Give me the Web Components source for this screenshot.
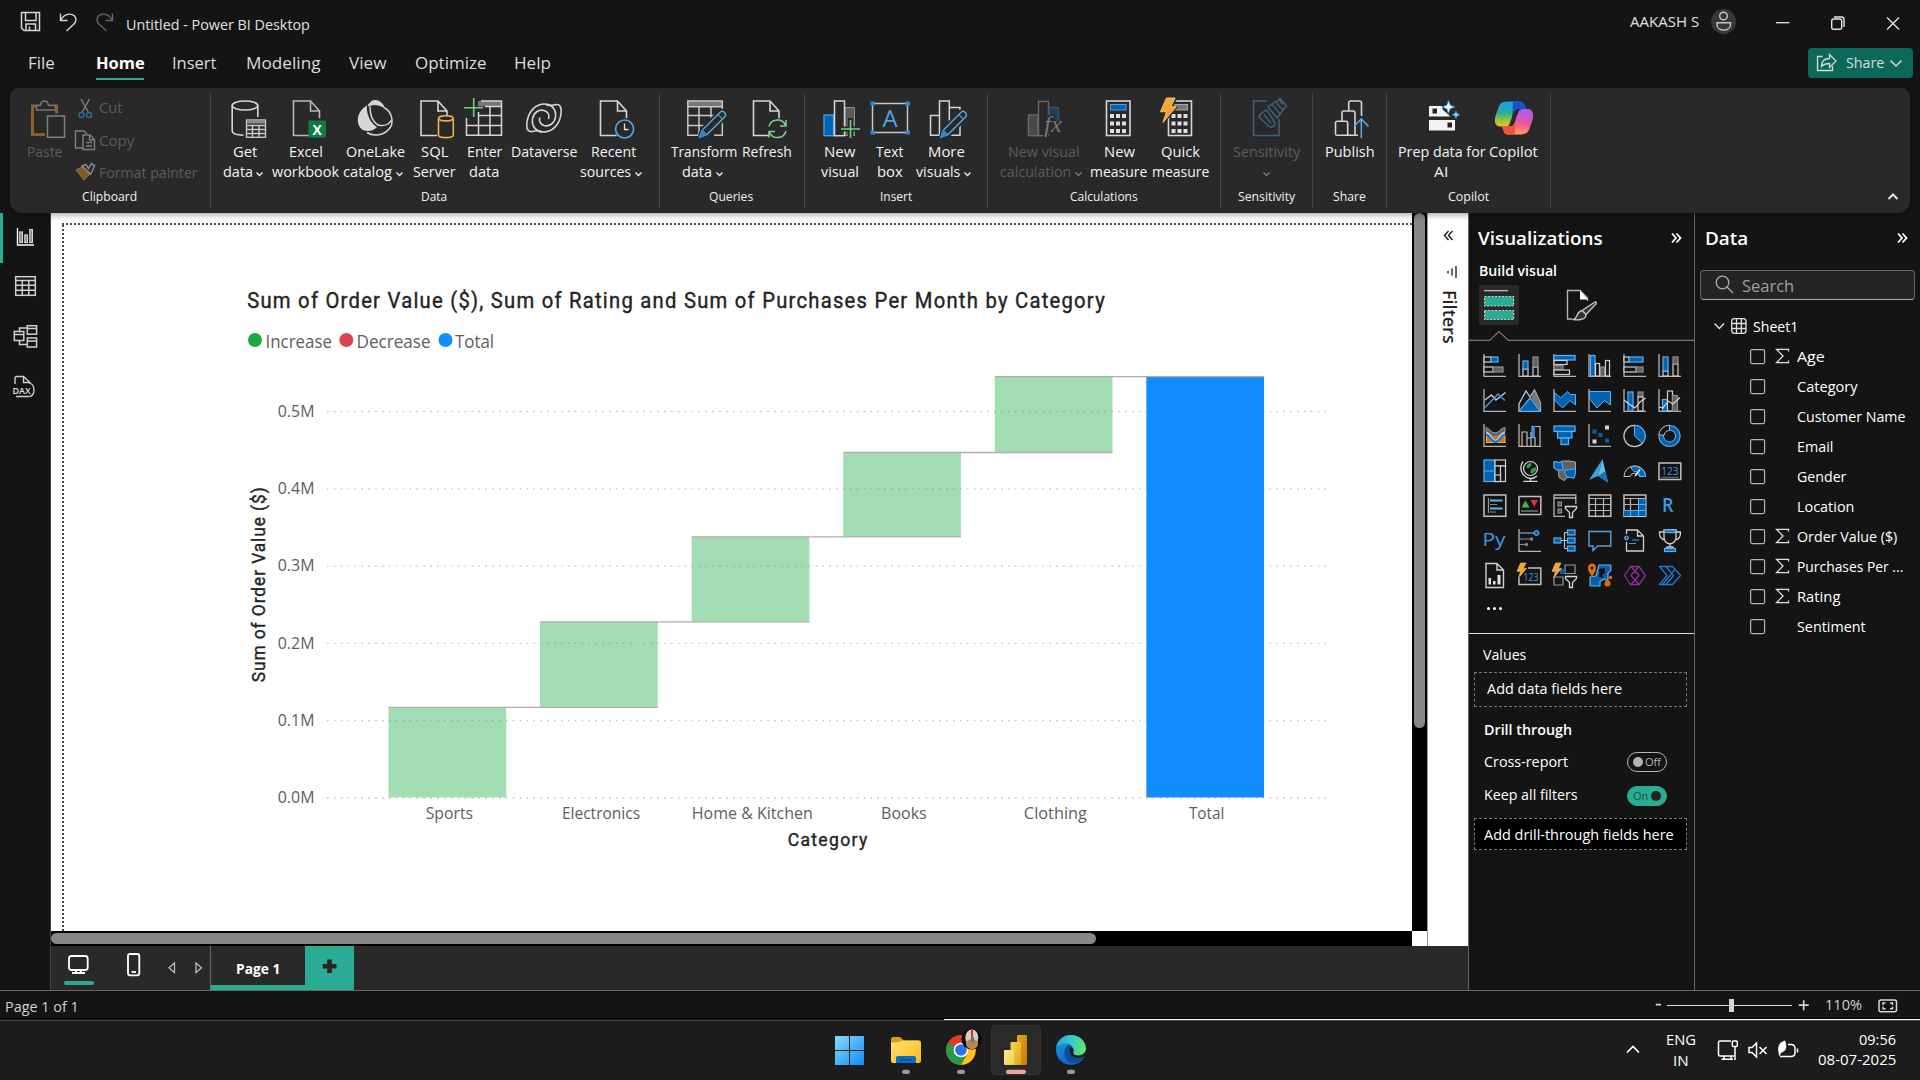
<!DOCTYPE html>
<html lang="en">
<head>
<meta charset="utf-8">
<title>Untitled - Power BI Desktop</title>
<style>
html,body{margin:0;padding:0;background:#141414;overflow:hidden}
body{width:1920px;height:1080px;font-family:"Open Sans","Noto Sans",sans-serif;color:#fff}
</style>
</head>
<body>
<pbi-app></pbi-app>
<script>
const BASE = `*{box-sizing:border-box}svg{display:block;overflow:visible}.flow{display:flex;align-items:flex-start}.flow>*{flex:none}`;
class Base extends HTMLElement {
  connectedCallback() {
    if (this.shadowRoot) return;
    this.attachShadow({ mode: 'open' }).innerHTML = `<style>${BASE}${this.css()}</style>${this.html()}`;
  }
  css() { return ':host{display:block}'; }
  html() { return '<slot></slot>'; }
}
const def = (n, c) => customElements.define(n, c);

/* Single line of text condensed or widened to a set width */
def('fit-text', class extends HTMLElement {
  connectedCallback() {
    if (this.shadowRoot) return;
    const w = +this.getAttribute('w'), s = this.getAttribute('s');
    this.attachShadow({ mode: 'open' }).innerHTML =
      `<style>:host{display:block;width:${w}px;height:20px;line-height:20px;font-size:${s}px;white-space:nowrap}
      span{display:inline-block;transform-origin:0 50%;white-space:pre}</style><span><slot></slot></span>`;
    const sp = this.shadowRoot.querySelector('span');
    const n = sp.getBoundingClientRect().width;
    if (n) sp.style.transform = `scaleX(${w / n})`;
  }
});

/* T: text by ink start and baseline; S: drawing by its box; flow: lays them in a row */
const T = (x, base, w, size, text, style = '') => {
  const fs = size * 0.975, x0 = x - size * 0.045, ww = w + size * 0.09;
  return { x: x0, w: ww, y: base - 0.388 * fs - 10, html: `<fit-text w="${ww.toFixed(1)}" s="${fs.toFixed(2)}" style="${style}">${text}</fit-text>` };
};
const S = (x, y, w, h, inner) => ({ x, y, w, html: `<svg width="${w}" height="${h}" viewBox="${x} ${y} ${w} ${h}" fill="none">${inner}</svg>` });
const flow = (x0, y0, items) => {
  let c = x0;
  return '<div class="flow">' + items.map(i => {
    const r = `<div style="width:${i.w.toFixed(1)}px;margin-left:${(i.x - c).toFixed(1)}px;margin-top:${(i.y - y0).toFixed(1)}px">${i.html}</div>`;
    c = i.x + i.w; return r;
  }).join('') + '</div>';
};

def('title-bar', class extends Base {
  css() { return ':host{display:block;height:46px;color:#e0e0e0}'; }
  html() {
    return flow(0, 0, [
      S(20, 11, 22, 22, `<g stroke="#d6d6d6" stroke-width="1.5"><path d="M21.5 12.5H39.5V30.5H24L21.5 28Z"/><path d="M25.500 12.500V20.500H36V12.500M26 30.500V24H35.500V30.500M29.500 30V26.500"/></g>`),
      S(59, 12, 19, 20, `<path d="M60.500 13.500V20.500H67.500M61 20C64 14 71 12.500 74.500 16C77 19 76 22 73.500 24.500L66.500 31" stroke="#d6d6d6" stroke-width="1.400"/>`),
      S(96, 12, 19, 20, `<path d="M112.500 13.500V20.500H105.500M112 20C109 14 102 12.500 98.500 16C96 19 97 22 99.500 24.500L106.500 31" stroke="#666" stroke-width="1.400"/>`),
      T(126.500, 30, 182.6, 15, 'Untitled - Power BI Desktop'),
      T(1630.500, 27.0, 68, 15, 'AAKASH S'),
      S(1710, 8, 27, 27, `<circle cx="1723.500" cy="21.500" r="12.500" fill="#373737"/><g stroke="#c8c8c8" stroke-width="1.400"><circle cx="1723.500" cy="16" r="3.800"/><path d="M1717 22.700H1730.500V24.500C1730.500 32 1717 32 1717 24.500Z"/></g>`),
      S(1775, 15, 16, 16, `<path d="M1776 22.700H1789.500" stroke="#e4e4e4" stroke-width="1.300"/>`),
      S(1830, 15, 16, 16, `<g stroke="#e4e4e4" stroke-width="1.400"><rect x="1831.700" y="19" width="10" height="10.300" rx="2"/><path d="M1834 17H1841.500Q1844 17 1844 19.500V27"/></g>`),
      S(1885, 15, 16, 16, `<path d="M1887 17.500L1899 29.500M1899 17.500L1887 29.500" stroke="#e4e4e4" stroke-width="1.400"/>`)
    ]);
  }
});

def('menu-bar', class extends Base {
  css() { return `:host{display:block;height:42px;color:#dcdcdc}.t{display:flex}
    .share{margin-left:auto}.btn{width:105px;height:30px;background:#0c695a;border-radius:4px;margin:2px 7px 0 0;color:#d3dedc}
    .u{width:48px;height:2.500px;background:#2aab94;margin:5px 0 0 96px}`; }
  html() {
    return `<div class="t"><div>` + flow(0, 46, [
      T(28.8, 69, 25.3, 17, 'File'), T(96.6, 69, 47.2, 17, 'Home', 'font-weight:700;color:#fff'), T(173, 69, 43, 17, 'Insert'),
      T(246.6, 69, 73, 17, 'Modeling'), T(350, 69, 36, 17, 'View'), T(415.4, 69, 70, 17, 'Optimize'), T(515, 69, 35.5, 17, 'Help')]) +
      `<div class="u"></div></div><div class="share"><div class="btn">` + flow(1808, 48, [
      S(1816, 52, 21, 20, `<path d="M1822.500 56.500H1817.500V70.500H1832.500V66M1821.500 66.500C1821.500 60.500 1825 58.500 1829.500 58.500V54.500L1836 61L1829.500 67.500V63.500C1826 63.500 1824 64 1821.500 66.500Z" stroke="#cfdeda" stroke-width="1.300"/>`),
      T(1847, 68, 37, 15.5, 'Share'),
      S(1889, 59, 14, 8, `<path d="M1890.500 60.500L1896 66L1901.500 60.500" stroke="#d3dedc" stroke-width="1.500"/>`)]) + `</div></div></div>`;
  }
});

/* ---------- Ribbon ---------- */
const doc = (x, y, w, h, c = '#d6d6d6') => `<path d="M${x + w} ${y + h * .5}V${y + 10}L${x + w - 9} ${y}H${x}V${y + h}H${x + w * .62}M${x + w - 9} ${y}V${y + 10}H${x + w}" stroke="${c}" stroke-width="1.600"/>`;
const pencil = (x1, y1, x2, y2) => { const dx = x2 - x1, dy = y2 - y1, L = Math.hypot(dx, dy), a = Math.atan2(dy, dx) * 180 / Math.PI; return `<g transform="translate(${x1} ${y1}) rotate(${a})"><path d="M0 0L8 -4H${L - 3}Q${L} -4 ${L} 0Q${L} 4 ${L - 3} 4H8Z" fill="#292929" stroke="#292929" stroke-width="4"/><path d="M0 0L7 -3.200H${L - 3}Q${L} -3.200 ${L} 0Q${L} 3.200 ${L - 3} 3.200H7Z" stroke="#5aa7e0" stroke-width="1.400"/><path d="M0 0L7 -3.200V3.200Z" fill="#2b88d8" stroke="#2b88d8"/><path d="M${L - 6} -3V3" stroke="#5aa7e0"/></g>`; };
const keys = (x, y) => [0, 1, 2].map(r => [0, 1, 2].map(c => `<rect x="${x + c * 6}" y="${y + r * 7.500}" width="4" height="4" fill="#e0e0e0"/>`).join('')).join('');
const chev = (x, col = '#e8e8e8') => S(x, 171, 7, 5, `<path d="M${x + .5} 171.500L${x + 3.500} 174.500L${x + 6.500} 171.500" stroke="${col}" stroke-width="1.500"/>`);
const bolt = (x, y, k = 1) => `<path transform="translate(${x} ${y}) scale(${k})" d="M6 0H15L10.500 9H16L2.500 25L6 14H0Z" fill="#f2a33c" stroke="#ffc266" stroke-width="1"/>`;

const RI = {
  get: `<g stroke="#d6d6d6" stroke-width="1.600"><ellipse cx="245" cy="105.500" rx="12.800" ry="4.500"/><path d="M232.200 105.500V131C232.200 133.500 237 135 243.500 135.200M257.800 105.500V117"/></g><rect x="245.500" y="119.500" width="20.500" height="18.300" fill="#292929"/><g stroke="#c8c8c8" stroke-width="1.400"><rect x="246.500" y="120" width="19" height="17.300"/><path d="M246.500 125.500H265.500M246.500 129.500H265.500M246.500 133.500H265.500M252.500 125V137M259 125V137"/></g><rect x="247" y="120.500" width="18" height="3" fill="#8a8a8a"/>`,
  excel: doc(293.5, 101, 26, 34.5, '#b9b9b9') + `<rect x="308.500" y="120.500" width="17.500" height="17.200" fill="#107c41"/><text x="317.200" y="134.500" text-anchor="middle" fill="#fff" font-weight="700" font-size="14">X</text>`,
  lake: `<path d="M375 100.500C380 100.500 383 104 384 107.500C378 103.500 372 104.500 368 106C369.500 102.500 372 100.500 375 100.500Z" fill="#d6d6d6" stroke="#d6d6d6"/><path d="M367 105.500C358 110 355.500 121 360 127.500C363.500 132.500 373 132 377 127C370 123 366 113 367 105.500Z" fill="#d6d6d6"/><path d="M384 107.500C393 112 394 124 389 129C384 135 374 137 367 132.500M370 106.500C370 117 374 124 380 125.500C385 126 389.500 123.500 391.500 120" stroke="#d6d6d6" stroke-width="1.500"/>`,
  sql: doc(421, 101, 26, 34.5) + `<g stroke="#f0b050" stroke-width="1.600" fill="#292929"><path d="M438.500 118.500V135C438.500 138.500 453.300 138.500 453.300 135V118.500"/><ellipse cx="445.900" cy="118.300" rx="7.400" ry="2.600"/></g>`,
  enter: `<rect x="478" y="101" width="23.500" height="5.500" fill="#777"/><g stroke="#d6d6d6" stroke-width="1.500"><path d="M481 101H501.500V135.200H466.500V118M466.500 135V118M485 106.500H501.500M478 115.500H501.500M466.500 125.500H501.500M478.500 112V135M490 106.500V135"/></g><path d="M473.700 98V117M464 107.700H483" stroke="#6fd07f" stroke-width="1.600"/>`,
  verse: `<g stroke="#d6d6d6" stroke-width="1.600"><path d="M541 131.500C536 129.500 533 132 530 131.500C527 131 526.500 126 527 122C528.500 111 536 104 544.500 104C552 104 556.500 110 555.500 117C554.500 123.500 549 127 544 125.500C540 124 538.500 120.500 540 117.500"/><path d="M546 104.500C551 107 554.500 104 557.500 104.500C561 105 561.500 110 561 114C559.500 125 552 132 543.500 132C536 132 531.500 126 532.500 119C533.500 112.500 539 109 544 110.500C548.500 112 550 115.500 548.500 119"/></g>`,
  recent: doc(600.5, 101, 26, 34.5) + `<circle cx="624.600" cy="129" r="9" fill="#292929" stroke="#5aa7e0" stroke-width="1.600"/><path d="M624.500 123.500V129.500H628.500" stroke="#ddd" stroke-width="1.300"/>`,
  transform: `<rect x="688" y="101" width="34" height="5.500" fill="#777"/><g stroke="#c8c8c8" stroke-width="1.500"><path d="M722.300 110V101H687.800V135.200H700M687.800 106.800H722.300M687.800 115.500H716M687.800 125.500H708M699 107V135M711 107V120"/></g><path d="M714 135.200H722.300V122" stroke="#c8c8c8" stroke-width="1.500"/>` + pencil(699.7, 137.3, 724.5, 112.5),
  refresh: doc(753.5, 101, 25.5, 34.5) + `<circle cx="777.500" cy="128.700" r="9" fill="#292929"/><g stroke="#7fd48f" stroke-width="1.500"><path d="M769 126.500A8.800 8.800 0 0 1 785.500 125M786 120V126H780M786 131A8.800 8.800 0 0 1 769.500 132.500M769 137.500V131.500H775"/></g>`,
  newvis: `<rect x="845" y="107.500" width="9.500" height="28" fill="#5a5a5a" stroke="#909090"/><rect x="824" y="115" width="9.500" height="20.700" fill="#0063b1" stroke="#4ba0e8" stroke-width="1.300"/><rect x="834.500" y="101" width="10" height="34.700" fill="#292929" stroke="#d6d6d6" stroke-width="1.500"/><path d="M850.500 118V140M840 129H861" stroke="#292929" stroke-width="5"/><path d="M850.500 120V138M841 129H860" stroke="#6fd07f" stroke-width="1.600"/>`,
  textbox: `<rect x="872.500" y="103.500" width="35" height="29" stroke="#c8c8c8" stroke-width="1.500"/><g fill="#2b88d8"><rect x="870.500" y="101.500" width="4.500" height="4"/><rect x="905.500" y="101.500" width="4.500" height="4"/><rect x="870.500" y="130.500" width="4.500" height="4"/><rect x="905.500" y="130.500" width="4.500" height="4"/></g><text x="890" y="127" text-anchor="middle" font-size="24" fill="#4ba0e8">A</text>`,
  more: `<g stroke="#d6d6d6" stroke-width="1.500"><path d="M938.700 115.500H930.500V135.300H943M939.500 135V101H949.300V127M949.300 107.500H960V112M960 125V135.300H950"/></g>` + pencil(940.8, 137.3, 965.3, 112.5),
  calc: `<g stroke="#6b6b6b" stroke-width="1.400"><rect x="1028.500" y="115" width="9.500" height="20.700" fill="#484848"/><rect x="1038.500" y="101.500" width="10" height="34.200" fill="#292929"/><rect x="1049" y="107.500" width="9.500" height="13" fill="#1d3f5c" stroke="#3b5568"/></g><text x="1053" y="132" text-anchor="middle" font-family="Liberation Serif,serif" font-style="italic" font-size="24" fill="#777" stroke="#292929" stroke-width="3" paint-order="stroke">fx</text>`,
  measure: `<rect x="1106.500" y="101" width="23.500" height="34.500" stroke="#d6d6d6" stroke-width="1.600"/><rect x="1110.500" y="104.500" width="15.500" height="5.500" fill="#0063b1" stroke="#4ba0e8"/>` + keys(1110, 114),
  quick: `<rect x="1168.500" y="101" width="23" height="34.500" stroke="#d6d6d6" stroke-width="1.600"/><rect x="1174" y="104.500" width="13.500" height="5.500" fill="#777" stroke="#aaa"/>` + keys(1171.5, 114) + `<path d="M1165 97H1178L1173 107H1178L1162 126L1163 114H1158Z" fill="#292929"/>` + bolt(1160.5, 98, .98),
  sens: `<g stroke="#3f617a" stroke-width="1.500"><path d="M1267 101H1253.500V135.500H1279V119"/><path d="M1261.500 113.500L1265 110.500Q1266.500 110 1267.500 111L1275 123Q1275 126 1272 127Q1270 127.500 1268.500 126L1259 117Q1259.500 114.500 1261.500 113.500ZM1264 114.500L1271 123.500"/><path d="M1268 107L1272 104L1280 114L1277 118ZM1272 104L1275.500 101.500L1283 110.500L1280 114M1276 103L1280 98.500L1286.500 106L1282.500 110M1279 99.500L1283 104.500" fill="#292929"/></g>`,
  publish: `<g stroke="#d6d6d6" stroke-width="1.600"><path d="M1348 135.300H1337Q1335.500 135.300 1335.500 134V123Q1335.500 121.300 1337 121.300H1346Q1347.700 121.300 1347.700 123V135.300H1358M1342 121V113Q1342 111 1344 111H1353Q1355 111 1355 113V135M1348.700 111V103Q1348.700 101 1350.700 101H1359.500Q1361.500 101 1361.500 103V116"/></g><path d="M1361.300 138V119M1354 126.500L1361.300 119L1368.500 126.500" stroke="#5aa7e0" stroke-width="1.600"/>`,
  prep: `<path d="M1429 106H1455V116.500H1429ZM1429 120H1455V130.500H1429Z" fill="#f4f4f4"/><rect x="1432.500" y="108.500" width="4.500" height="5" fill="#222"/><rect x="1447.500" y="122.500" width="4.500" height="5" fill="#222"/><path d="M1441 104L1449 98L1462 112L1456 119.500H1452L1449 115L1443 110Z" fill="#292929"/><g fill="#fff" stroke="#1a8fe0" stroke-width="1"><path d="M1448.500 100.500L1450.300 105.200L1455 107L1450.300 108.800L1448.500 113.500L1446.700 108.800L1442 107L1446.700 105.200Z"/><path d="M1456 111L1457.200 113.500L1459.700 114.700L1457.200 116L1456 118.500L1454.800 116L1452.300 114.700L1454.800 113.500Z" fill="#8fd0ff"/></g>`,
  copilot: `<defs><linearGradient id="a" x1="0" y1="0" x2="0" y2="1"><stop offset="0" stop-color="#1f9cf0"/><stop offset=".45" stop-color="#25b09c"/><stop offset=".75" stop-color="#9cc23a"/><stop offset="1" stop-color="#f5c518"/></linearGradient><linearGradient id="b" x1=".6" y1="0" x2=".3" y2="1"><stop offset="0" stop-color="#a95cf0"/><stop offset=".5" stop-color="#f0559a"/><stop offset="1" stop-color="#ffae5c"/></linearGradient></defs><path d="M1510 101.500H1520C1524 101.500 1524.500 106 1526 109H1518C1514 109 1513 113 1512 117L1509.500 124C1508.500 127 1506 127 1504 126.500H1500C1495 126.500 1494 121 1495.500 116L1499 106C1501 102 1504 101.500 1510 101.500Z" fill="url(#a)"/><path d="M1513 101.500H1520C1524 101.500 1524.500 106 1526 109H1518C1514.500 109 1513.500 112 1512.500 115Z" fill="#1750d6"/><path d="M1518 134.500H1508C1504 134.500 1503.500 130 1502 126.500H1510C1514 126.500 1515 122 1516 118L1518.500 112C1519.500 109 1522 109 1524 109H1528C1533 109 1534 115 1532.500 120L1529 130C1527 134 1524 134.500 1518 134.500Z" fill="url(#b)"/><path d="M1515 134.500H1508C1504 134.500 1503.500 130 1502 126.500H1510C1513 126.500 1514.500 124 1515.300 121Z" fill="#f0503c"/>`
};

/* One command: icon above one or two caption lines */
def('ribbon-item', class extends Base {
  css() { return ':host{display:block;flex:none}.icon{height:44px}.l{height:20px}.l .flow{height:20px}'; }
  html() {
    const d = RIBBON[this.getAttribute('group')].items[+this.getAttribute('index')];
    const [x, w, ic, l1, l2, c, off] = d;
    const col = off ? 'color:#5c5c5c' : 'color:#f3f3f3';
    return `<div class="icon">${flow(x, 97, [S(x, 97, w, 42, RI[ic])])}</div><div class="l">${flow(x, 141.5, [T(l1[0], 157.3, l1[1], 15, l1[2], col)])}</div><div class="l">${flow(x, 161.5, [].concat(l2 ? [T(l2[0], 177.3, l2[1], 15, l2[2], col)] : [], c ? [{ ...chev(c, off ? '#777' : '#e8e8e8'), y: 172.5 }] : []))}</div>`;
  }
});
const RIBBON = [
  { x: 211, end: 659, label: [422, 25, 'Data'], items: [
    [221, 50, 'get', [234, 23, 'Get'], [224, 28.7, 'data'], 256],
    [271, 70, 'excel', [289.5, 32.5, 'Excel'], [273, 65.7, 'workbook']],
    [341, 66, 'lake', [346.4, 57.7, 'OneLake'], [344, 47.6, 'catalog'], 396],
    [407, 52, 'sql', [421.3, 26, 'SQL'], [413.7, 41.3, 'Server']],
    [459, 50, 'enter', [467.6, 34, 'Enter'], [470, 29, 'data']],
    [509, 70, 'verse', [511.8, 65.2, 'Dataverse']],
    [579, 68, 'recent', [592, 44, 'Recent'], [581, 49.7, 'sources'], 635]] },
  { x: 660, end: 804, label: [710, 43, 'Queries'], items: [
    [669, 71, 'transform', [672, 65.2, 'Transform'], [683, 28.6, 'data'], 716],
    [740, 54, 'refresh', [742.5, 48.5, 'Refresh']]] },
  { x: 805, end: 987, label: [880.6, 31, 'Insert'], items: [
    [816, 48, 'newvis', [824.7, 30, 'New'], [821.3, 36.6, 'visual']],
    [864, 50, 'textbox', [877, 26, 'Text'], [877.7, 24.4, 'box']],
    [914, 62, 'more', [928.6, 35.4, 'More'], [917, 43, 'visuals'], 964]] },
  { x: 988, end: 1220, label: [1071, 66.5, 'Calculations'], items: [
    [998, 89, 'calc', [1008.6, 70.3, 'New visual'], [1001, 70, 'calculation'], 1075, 1],
    [1087, 63, 'measure', [1104.5, 29.5, 'New'], [1091, 56, 'measure']],
    [1150, 63, 'quick', [1161.4, 37.5, 'Quick'], [1152.5, 56, 'measure']]] },
  { x: 1221, end: 1312, label: [1239, 56, 'Sensitivity'], items: [[1230, 74, 'sens', [1234, 66, 'Sensitivity'], null, 1263, 1]] },
  { x: 1313, end: 1386, label: [1333.6, 31.7, 'Share'], items: [[1322, 56, 'publish', [1325.3, 48.2, 'Publish']]] },
  { x: 1387, end: 1550, label: [1448.4, 40, 'Copilot'], items: [
    [1396, 91, 'prep', [1398.8, 86.3, 'Prep data for'], [1435, 13, 'AI']],
    [1487, 55, 'copilot', [1489.9, 47.4, 'Copilot']]] }
];
def('ribbon-group', class extends Base {
  css() { return ':host{display:block;flex:none}.g{height:115px;border-right:1px solid #444}.r{display:flex;height:95.500px;padding-top:4px}'; }
  html() {
    const n = +this.getAttribute('index'), g = RIBBON[n];
    return `<div class="g" style="width:${g.end + 1 - g.x}px"><div class="r" style="padding-left:${g.items[0][0] - g.x}px">${g.items.map((_, i) => `<ribbon-item group="${n}" index="${i}"></ribbon-item>`).join('')}</div>${flow(g.x, 188.5, [T(g.label[0], 200.7, g.label[1], 13, g.label[2], 'color:#f0f0f0')])}</div>`;
  }
});
def('clipboard-group', class extends Base {
  css() { return ':host{display:block;flex:none}.g{width:201px;height:115px;border-right:1px solid #444;color:#5c5c5c}.r{display:flex;height:95.500px}.a{width:60px}.b{display:flex;flex-direction:column}.b>div{height:32.500px;flex:none}'; }
  html() {
    return `<div class="g"><div class="r"><div class="a">${flow(10, 93, [S(30, 99, 38, 40, `<rect x="32.500" y="106" width="24" height="28.500" stroke="#89622a" stroke-width="3"/><path d="M36.500 110V105.500H40.500C41 99.500 48 99.500 48.500 105.500H55.500V110Z" fill="#292929" stroke="#757575" stroke-width="1.500"/><rect x="47.500" y="116" width="17" height="21.300" fill="#292929" stroke="#292929" stroke-width="5"/><rect x="47.500" y="116" width="17" height="21.300" stroke="#808080" stroke-width="1.500"/>`)])}${flow(10, 139, [T(27.8, 156.6, 34, 15, 'Paste')])}</div>
    <div class="b"><div>${flow(70, 93, [S(76, 98, 20, 21, `<path d="M81 99L88.500 112.500M89.500 99L82 112.500" stroke="#808080" stroke-width="1.400"/><g stroke="#2e6a94" stroke-width="1.500"><circle cx="81.500" cy="115" r="2.500"/><circle cx="89" cy="115" r="2.500"/></g>`), T(100, 112.7, 22, 15, 'Cut')])}</div>
    <div>${flow(70, 125.5, [S(74, 129, 22, 22, `<g stroke="#808080" stroke-width="1.400"><path d="M83 148H75.500V131H84L87 134"/><path d="M83 135H90L94.500 139.500V149.500H83ZM89.500 135V140H94M86 142.500H92M86 146H92"/></g>`), T(100, 146, 34, 15, 'Copy')])}</div>
    <div>${flow(70, 158, [S(74, 162, 22, 21, `<path d="M76 170L84 180L90 174L82 167Z" fill="#7c5c22" stroke="#8a7550"/><path d="M82 166L90.500 174L92.500 170.500L94.500 165.500L91.500 163.500L88.500 168.500L86 164.500Z" fill="#292929" stroke="#8a8a8a" stroke-width="1.500"/>`), T(100, 178, 97.3, 15, 'Format painter')])}</div></div></div>
    ${flow(10, 188.5, [T(83, 200.7, 54, 13, 'Clipboard', 'color:#f0f0f0')])}</div>`;
  }
});
def('ribbon-bar', class extends Base {
  css() { return ':host{display:block;height:125px;margin:0 10px;background:#292929;border-radius:9px 9px 12px 12px;position:relative;z-index:2;box-shadow:0 2px 6px rgba(0,0,0,.35)}.r{display:flex;padding-top:5px}.c{margin:99px 10px 0 auto}'; }
  html() {
    return `<div class="r"><clipboard-group></clipboard-group>${RIBBON.map((_, i) => `<ribbon-group index="${i}"></ribbon-group>`).join('')}
    <svg class="c" width="14" height="9" viewBox="0 0 14 9" fill="none"><path d="M2.500 7L7 2.500L11.500 7" stroke="#e0e0e0" stroke-width="2"/></svg></div>`;
  }
});

/* ---------- Left rail ---------- */
def('side-rail', class extends Base {
  css() { return ':host{display:block;width:51px;border-right:1px solid #444;background:#141414}.i{height:50px;display:flex}.on{border-left:3px solid #2aab94}.on svg{margin-left:-3px}'; }
  html() {
    return `<div class="i on"><svg width="50" height="50" viewBox="0 213 50 50" fill="none"><path d="M17.500 228V245H34" stroke="#fff" stroke-width="1.400"/><g fill="#777" stroke="#d6d6d6" stroke-width="1.200"><rect x="19.800" y="232" width="2.600" height="10.500"/><rect x="24.800" y="235" width="2.600" height="7.500"/><rect x="29.800" y="229.500" width="2.600" height="13"/></g></svg></div>
    <div class="i"><svg width="50" height="50" viewBox="0 263 50 50" fill="none"><g stroke="#cfcfcf" stroke-width="1.500"><rect x="15.700" y="276.700" width="19.600" height="18.600"/><path d="M15.700 280.500H35.300M15.700 285.300H35.300M15.700 290.300H35.300M22.300 280V295M28.800 280V295"/></g></svg></div>
    <div class="i"><svg width="50" height="50" viewBox="0 313 50 50" fill="none"><g stroke="#cfcfcf" stroke-width="1.500"><rect x="14.300" y="331.500" width="9.500" height="9"/><path d="M14 334.500H24M27.300 328.500H36.500M27.300 341H36.500M19.500 331V328H27M19.500 341V344.500H27"/><rect x="27.300" y="325.700" width="9.300" height="8.500"/><rect x="27.300" y="338" width="9.300" height="9"/></g></svg></div>
    <div class="i"><svg width="50" height="50" viewBox="0 363 50 50" fill="none"><path d="M15 384V378.500Q15 376.500 17 376.500H23.500L30 382.500V384M23.500 377V382.500H30M16 396.500H29" stroke="#cfcfcf" stroke-width="1.400"/><text x="12.500" y="393.500" font-size="9.500" font-weight="600" fill="#e0e0e0" textLength="18" lengthAdjust="spacingAndGlyphs">DAX</text><path d="M31 383.500Q34.500 386 33.800 392Q33 396 29.500 396.500" stroke="#cfcfcf" stroke-width="1.300"/></svg></div>`;
  }
});

/* ---------- Report canvas ---------- */
def('waterfall-chart', class extends Base {
  css() { return ':host{display:block;width:1361px;height:718px;background:#fff}text{white-space:pre}'; }
  html() {
    const t = (x, y, w, s, txt, f = '#605e5c') => `<text x="${x - s * .045}" y="${y}" font-size="${s * .975}" fill="${f}" textLength="${w + s * .09}" lengthAdjust="spacingAndGlyphs">${txt}</text>`;
    /* headings: slightly narrowed glyphs with wider tracking */
    const hd = (x, y, w, s, txt) => `<g transform="translate(${x} ${y}) scale(.945 1)"><text x="0" y="0" font-family="Roboto,sans-serif" font-size="${s}" fill="#252423" stroke="#252423" stroke-width=".4" textLength="${(w + .5) / .945}" lengthAdjust="spacing">${txt}</text></g>`;
    const grid = [0, 1, 2, 3, 4, 5].map(i => { const y = 798 - i * 77.3; return `<path d="M327 ${y}H1326" stroke="#c8c6c4" stroke-width="1.300" stroke-dasharray="1.600 5.280"/>` + t(278.5, y + 5.3, 35.3, 16, `0.${i}M`); }).join('');
    const tops = [707.4, 621.8, 536.8, 452.5, 376.6], X = i => 388.5 + i * 151.57;
    const bars = tops.map((y, i) => `<rect x="${X(i)}" y="${y}" width="117.700" height="${(i ? tops[i - 1] : 797.5) - y}" fill="#1aab40" fill-opacity=".4"/>`).join('') + `<rect x="${X(5)}" y="376.600" width="117.700" height="420.900" fill="#118dff"/>`;
    const lines = tops.map((y, i) => `<path d="M${X(i)} ${y}H${X(i + 1) + 117.7}" stroke="#b0adab" stroke-width="1.300"/>`).join('');
    return `<svg width="1361" height="718" viewBox="51 213 1361 718" style="overflow:hidden">
    <path d="M62 224H1412M63 225V931" stroke="#4a4a4a" stroke-width="2" stroke-dasharray="2 2"/>
    ${hd(247.2, 308, 857, 21.4, 'Sum of Order Value ($), Sum of Rating and Sum of Purchases Per Month by Category')}
    <circle cx="255" cy="340" r="7" fill="#1aab40"/><circle cx="346.300" cy="340" r="7" fill="#d64550"/><circle cx="445.500" cy="340" r="7" fill="#118dff"/>
    ${t(266.4, 348.3, 64.7, 18, 'Increase')}${t(357.4, 348.3, 72.4, 18, 'Decrease')}${t(455.8, 348.3, 37.5, 18, 'Total')}
    ${grid}${bars}${lines}
    ${t(426.4, 819, 46, 16, 'Sports')}${t(562.6, 819, 76.8, 16, 'Electronics')}${t(692.5, 819, 119.6, 16, 'Home &amp; Kitchen')}${t(881.8, 819, 44.2, 16, 'Books')}${t(1024.6, 819, 61.6, 16, 'Clothing')}${t(1189.6, 819, 34, 16, 'Total')}
    ${hd(787.7, 846, 79, 18.6, 'Category')}
    <g transform="translate(264.700 682.300) rotate(-90)">${hd(0, 0, 194.5, 18.4, 'Sum of Order Value ($)')}</g></svg>`;
  }
});
def('report-canvas', class extends Base {
  css() { return `:host{display:block;width:1417px}.top{display:flex;height:718px}.vs{width:15px;background:#000;padding:0 2px}.vt{height:515px;background:#888786;border-radius:6px}
    .hs{display:flex;height:15px}.ht{width:1361px;background:#000;padding:2px 0}.hth{width:1045px;height:11px;border-radius:6px;background:#888786}
    .body{display:flex}.l{width:1376px}.f{width:41px;background:#fff;border-left:1px solid #999}
    .v{writing-mode:vertical-rl;color:#252423;font-size:18px;font-weight:600;line-height:20px;height:58px;width:20px;margin:8px 0 0 12px;letter-spacing:0}
    .w{background:#fff;flex:1}`; }
  html() {
    return `<div class="body"><div class="l"><div class="top"><waterfall-chart></waterfall-chart><div class="vs"><div class="vt"></div></div></div><div class="hs"><div class="ht"><div class="hth"></div></div><div class="w"></div></div></div>
    <div class="f"><svg width="40" height="69" viewBox="1428 213 40 69" fill="none"><path d="M1448.500 231L1444.500 235.500L1448.500 240M1452.500 231L1448.500 235.500L1452.500 240" stroke="#252423" stroke-width="1.500"/><path d="M1456 266V278M1452 268.500V275.500M1448 271V273.500" stroke="#333" stroke-width="1.500"/></svg><div class="v">Filters</div></div></div>
    <page-tabs></page-tabs>`;
  }
});
def('page-tabs', class extends Base {
  css() { return `:host{display:flex;height:44px;background:#292929}.n{width:159px}.tab{width:95px;height:44px;border-left:1px solid #666;border-bottom:5px solid #2aab94}.p{width:49px;background:#2aab94}`; }
  html() {
    return `<div class="n"><svg width="159" height="44" viewBox="51 946 159 44" fill="none"><g stroke="#fff" stroke-width="1.800"><rect x="69" y="956" width="18.700" height="14" rx="2.500"/><path d="M72 973H85M76 970V973M81 970V973"/><rect x="128" y="954" width="11.300" height="21.300" rx="2"/><path d="M131.500 972H136"/></g><rect x="64" y="981" width="30" height="4" rx="2" fill="#2aab94"/><path d="M174.500 963V972.500L169 967.700ZM196 963V972.500L201.500 967.700Z" stroke="#b8b8b8" stroke-width="1.300"/></svg></div>
    <div class="tab">${flow(211, 946, [T(236.4, 974, 43, 15, 'Page 1', 'font-weight:700;color:#fff')])}</div>
    <div class="p"><svg width="49" height="44" viewBox="305 946 49 44"><path d="M329.500 959.500V973M322.700 966.200H336.500" stroke="#252423" stroke-width="4.600"/></svg></div>`;
  }
});

/* ---------- Visualizations pane ---------- */
const AX = '<path d="M1 0V22.300H23" stroke="#b4b4b4" stroke-width="1.300"/>';
const r = (x, y, w, h, k) => { const c = { b: ['#0063b1', '#5fb0ee'], g: ['#606060', '#8f8f8f'], w: ['#141414', '#d0d0d0'] }[k]; return `<rect x="${x}" y="${y}" width="${w}" height="${h}" fill="${c[0]}" stroke="${c[1]}" stroke-width="1.200"/>`; };
const funnel = '<path d="M12.500 12.500H23.500V14.500L19.500 18.500V23.500H16.500V18.500L12.500 14.500Z" fill="#141414" stroke="#d6d6d6" stroke-width="1.300"/>';
const tx = (x, y, s, t, w, c = '#3a9be8', b = 400) => `<text x="${x}" y="${y}" font-size="${s}" fill="${c}" font-weight="${b}" textLength="${w}" lengthAdjust="spacingAndGlyphs">${t}</text>`;
const sbolt = bolt(-1, -1, .6);
const VI = [
  AX + r(1, 3, 7, 5, 'w') + r(8, 3, 7, 5, 'b') + r(1, 13, 9, 5, 'w') + r(10, 13, 10, 5, 'g'),
  AX + r(5, 15, 5, 7, 'w') + r(5, 7, 5, 8, 'b') + r(15, 13, 5, 9, 'w') + r(15, 3, 5, 10, 'g'),
  AX + r(1, 1.5, 21, 4.5, 'b') + r(1, 6.5, 13, 4, 'w') + r(1, 11.500, 9, 4.5, 'g') + r(1, 16, 15.500, 4.500, 'w'),
  AX + r(2.5, 1.5, 4.500, 20.500, 'b') + r(7.5, 9.5, 4, 12.500, 'w') + r(12.500, 13, 4, 9, 'g') + r(17.500, 6.500, 4, 15.500, 'w'),
  AX + r(1, 3, 5, 5, 'w') + r(6, 3, 14, 5, 'b') + r(1, 13, 12, 5, 'w') + r(13, 13, 7, 5, 'g'),
  AX + r(5, 17, 5, 5, 'w') + r(5, 3, 5, 14, 'b') + r(15, 10, 5, 12, 'w') + r(15, 3, 5, 7, 'g'),
  AX + '<path d="M2 11L8.500 6L13 11L22.500 3.500" stroke="#d0d0d0" stroke-width="1.300"/><path d="M1.500 19L15 5L22 11.500" stroke="#3a9be8" stroke-width="1.400"/>',
  '<path d="M1 22V15L8 2L12 8L16.500 1L22.500 14V22" stroke="#d0d0d0" stroke-width="1.200"/><path d="M16.500 1L22.500 14V22L13 9Z" fill="#777"/><path d="M1 22.300L12 9L22.300 22.300Z" fill="#0063b1" stroke="#5fb0ee" stroke-width="1.200"/>',
  AX + '<path d="M1.500 3.500L7.500 9L14.500 2.500L17.500 5.500H22.500V16L17 11.500L9.500 19L1.500 11Z" fill="#0063b1" stroke="#5fb0ee"/>',
  AX + '<path d="M1.500 2.500H22.500V16L16.500 11.500L9 19L1.500 9.500Z" fill="#0063b1" stroke="#5fb0ee"/>',
  AX + r(5, 3, 5, 19, 'b') + r(15, 3, 5, 5, 'g') + r(15, 8, 5, 14, 'w') + '<path d="M1 11L6 15L12 19L17 13L22.500 9" stroke="#d6d6d6" stroke-width="1.200"/>',
  AX + r(4.500, 10.500, 5, 11.500, 'b') + r(9.500, 2, 5, 20, 'w') + r(14.500, 6.500, 5, 15.500, 'g') + '<path d="M1 18L5 19L10 12L15 15L22 8.500" stroke="#d6d6d6" stroke-width="1.200"/>',
  AX + '<rect x="3.500" y="12" width="18.500" height="6.500" fill="#e06c00" stroke="#ffb04a"/><path d="M3 3.500C7 4 8 9 12 9C16 9 17 4 22 3.500V8C17 9 16 13 12 13C8 13 7 9 3 8Z" fill="#666" stroke="#999"/><path d="M3 9.500C8 10.500 7.500 17.500 12.500 17.500C17 17.500 17 10.500 22 9.500" stroke="#cfe4f7" stroke-width="3.200"/><path d="M3 10.500C8 11.500 7.500 18 12.500 18C17 18 17 11.500 22 10.500" stroke="#1a74c8" stroke-width="2.400"/>',
  AX + '<path d="M4 22V8H9V22M9 14H13V8M13 22V14" stroke="#c0c0c0" stroke-width="1.200"/>' + r(14, 2.500, 2, 11, 'b') + '<path d="M17 13V22M17 2.500H22V22" stroke="#c0c0c0" stroke-width="1.200"/>',
  r(1, 2, 21, 5.500, 'b') + r(4.500, 7.500, 14.500, 6.500, 'b') + r(8, 14, 7.500, 6.500, 'b'),
  AX + '<path d="M17 1.500H21V5.500H17ZM4.500 15.500H8.500V19.500H4.500Z" fill="#d6d6d6"/><path d="M4.500 5.500H8.500V9.500H4.500ZM10.500 9H14.500V13H10.500ZM17 14.500H21V18.500H17Z" fill="#0063b1"/>',
  '<circle cx="11.500" cy="12" r="10.600" stroke="#c8c8c8" stroke-width="1.200"/><path d="M11.500 12V1.400A10.600 10.600 0 0 1 19.500 19Z" fill="#0063b1" stroke="#5fb0ee"/>',
  '<circle cx="11.500" cy="12" r="8.300" stroke="#5fb0ee" stroke-width="5.600"/><circle cx="11.500" cy="12" r="8.300" stroke="#0063b1" stroke-width="3.600"/><path d="M11.500 1.200A10.800 10.800 0 0 0 .8 11H6.200A5.500 5.500 0 0 1 11.500 6.500Z" fill="#141414" stroke="#b4b4b4"/>',
  r(1, 1, 11, 21.500, 'b') + r(12, 1, 10.500, 6, 'w') + r(12, 7, 5.500, 15.500, 'w') + r(17.500, 7, 5, 15.500, 'w') + r(12, 16, 5.500, 6.500, 'w') + '<path d="M1 12H12" stroke="#5fb0ee"/>',
  '<circle cx="12.500" cy="9.500" r="7" stroke="#d6d6d6" stroke-width="1.200"/><path d="M8 8L10 5L14 3.500L13 7L10 9.500ZM13 10L18 8L18.500 11L14 15L12.500 13Z" fill="#2f9e44"/><path d="M5 2.500C1 8 2.500 18 12.500 19.500C15 19.500 17 19 19 17M12.500 20V22M5.500 22.300H19.500" stroke="#d6d6d6" stroke-width="1.300"/>',
  '<path d="M1 2.500L6 3.500L10 2H16L22.500 3V13L21 19L15 18L11 21.500L6 18.500L5.500 12L1 9Z" fill="#606060" stroke="#aaa"/><path d="M1 2.500L6 3.500L8.500 2.500L10.500 11L4 11L1 9ZM12 11.500L22.500 9.500V14L21 19L14 18L11.500 14Z" fill="#0063b1" stroke="#5fb0ee"/>',
  '<path d="M14.500 0L1 21L10 17Z" fill="#3fa0dc"/><path d="M14.500 0L10 17L20 23.500Z" fill="#62c0ec"/><path d="M10 17L20 23.500L17.500 12Z" fill="#1473b8"/>',
  '<path d="M1 17.500A10.700 10.700 0 0 1 22.500 17.500H16.500A5 5 0 0 0 7 17.500Z" fill="#141414" stroke="#c0c0c0"/><path d="M7.500 8.500A10.700 10.700 0 0 1 22.500 17.500H17A5 5 0 0 0 11 12.500Z" fill="#0063b1" stroke="#5fb0ee"/><path d="M12 17L17 10.500" stroke="#e8e8e8" stroke-width="1.500"/>',
  '<rect x="1" y="4" width="21.800" height="16.500" stroke="#c0c0c0" stroke-width="1.500"/>' + tx(3.200, 15.500, 11.500, '123', 17.500) + '<path d="M3.500 18.300H20.500" stroke="#777"/>',
  '<rect x="1" y="1" width="21.800" height="21.300" stroke="#c0c0c0" stroke-width="1.500"/><path d="M5.500 4V19" stroke="#999" stroke-width="1.200"/><path d="M7 6.500H19.500M7 14.500H19.500" stroke="#5fb0ee" stroke-width="2"/><path d="M7 10.500H14M7 18H13" stroke="#888"/>',
  '<rect x="1" y="2.500" width="21.800" height="18" stroke="#c0c0c0" stroke-width="1.500"/><path d="M3.500 13.500L7.500 6.500L11.500 13.500Z" fill="#4caf50"/><path d="M12.500 6H20L16.200 13Z" fill="#e03131"/><path d="M3 17H20" stroke="#777" stroke-width="1.500"/>',
  '<path d="M12 22.300H1V1H22.800V10M1 4H22.800" stroke="#b4b4b4" stroke-width="1.300"/><rect x="5" y="8" width="3.500" height="4" fill="#555" stroke="#999"/><rect x="5" y="15" width="3.500" height="4" fill="#555" stroke="#999"/>' + funnel,
  '<rect x="1" y="1" width="21.800" height="21.300" stroke="#c0c0c0" stroke-width="1.500"/><path d="M1 4.500H23M1 10.500H23M1 16.500H23M7.500 4.500V22M15.500 4.500V22" stroke="#b4b4b4" stroke-width="1.200"/>',
  '<rect x="1" y="1" width="21.800" height="21.300" stroke="#c0c0c0" stroke-width="1.500"/><path d="M15.500 4.500H22.500V22H1V16.500H15.500Z" fill="#0063b1"/><path d="M1 4.500H23M1 10.500H15M7.500 4.500V16" stroke="#b4b4b4" stroke-width="1.200"/><path d="M15.500 5V22M15.500 10.500H22.500M1.500 16.500H22.500M7.500 17V22" stroke="#5fb0ee"/>',
  tx(4, 18, 19, 'R', 11.500, '#3a9be8', 600), tx(-.5, 17, 19, 'Py', 23, '#3a9be8', 500),
  '<path d="M1 0V22.300H23" stroke="#b4b4b4" stroke-width="1.300"/><path d="M1 4H17" stroke="#5fb0ee" stroke-width="1.200"/><circle cx="18.500" cy="4" r="2.500" fill="#0063b1" stroke="#5fb0ee"/><path d="M1 10H12M1 15.500H7" stroke="#888" stroke-width="1.200"/><circle cx="13.500" cy="10" r="1.700" fill="#888"/><circle cx="8.500" cy="15.500" r="1.700" fill="#888"/>',
  '<path d="M8 11.500H14.500M11.500 3.500V19.500M11.500 3.500H14.500M11.500 19.500H14.500" stroke="#c0c0c0" stroke-width="1.200"/>' + r(1, 9, 7, 5, 'b') + r(14.500, 1, 7.500, 5, 'b') + r(14.500, 9, 7.500, 5, 'b') + r(14.500, 17, 7.500, 5, 'b'),
  '<path d="M1 2.500H22.800V17H9.500L5 21.500V17H1Z" stroke="#5a9fd8" stroke-width="1.400"/>',
  '<path d="M3.500 5V1H14.500L20.500 7V22H3.500V13M14.500 1V7H20.500" stroke="#d0d0d0" stroke-width="1.300"/><circle cx="3.500" cy="9" r="2" fill="#0063b1" stroke="#5fb0ee"/><path d="M9 11H16M6 14.500H13" stroke="#3a9be8" stroke-width="1.200"/>',
  '<path d="M6 1H18V8Q18 14 12 15Q6 14 6 8ZM6 3H1.500Q1 10 7 11M18 3H22.500Q23 10 17 11M12 15V18M8.500 20L9 18H15L15.500 20" stroke="#d0d0d0" stroke-width="1.300"/>' + r(6.500, 1, 11, 2.500, 'b') + r(6.500, 19.500, 11, 3, 'b'),
  '<path d="M3 -.5H14L20.500 6V23.500H3ZM14 0V6H20.500" stroke="#d0d0d0" stroke-width="1.400"/><path d="M5.500 14H8V20.500H5.500ZM10 17H12.500V20.500H10ZM14.500 11H17.500V20.500H14.500Z" fill="#e0e0e0"/>',
  '<path d="M10 4H22.800V20.500H1V14" stroke="#c0c0c0" stroke-width="1.500"/>' + tx(5.500, 17, 11, '123', 15) + sbolt,
  '<path d="M12 1H22V9.500H12ZM1 13H10V21H1Z" stroke="#999" stroke-width="1.200"/><rect x="7" y="5" width="5" height="5" fill="#0063b1"/>' + funnel + sbolt,
  '<path d="M11 1H22.800V6.500L20 9V17L16 15L12 17.500V22H2V13L8 12Z" fill="#0a5ea8" stroke="#5fb0ee" stroke-width="1.200"/><path d="M11 5L17 4V9L14 11L16 14L11 13Z" fill="#141414"/><path d="M4 -.5C8.500 -.5 8.500 5 7.500 7L4 13L.5 7C-.5 5 -.5 -.5 4 -.5Z" fill="#e06c00"/><circle cx="4" cy="4" r="1.500" fill="#141414"/><circle cx="19.500" cy="19.500" r="3" fill="#e06c00"/><circle cx="22.500" cy="13.500" r="1.700" fill="#e06c00"/>',
  '<path d="M1.500 11.500L7.500 2.500H16L22.500 11.500L16 20.500H7.500ZM8 2.500L12 7L16 2.500M12 7L8 11.500L12 16L16 11.500ZM12 16L8 20.500M12 16L16 20.500" stroke="#8e2f96" stroke-width="1.300" stroke-linejoin="round"/>',
  '<path d="M1.500 2.500H14.500L22.500 11.500L14.500 20.500H1.500L9 11.500ZM8 2.500L15.500 11.500L8 20.500M5 20L16.500 6" stroke="#1f78d1" stroke-width="1.300" stroke-linejoin="round"/>'
];
const dbl = `<svg width="11" height="12" viewBox="0 0 11 12" fill="none"><path d="M1 1.500L5 6L1 10.500M5.500 1.500L9.500 6L5.500 10.500" stroke="#fff" stroke-width="1.800"/></svg>`;
def('viz-icon', class extends Base {
  css() { return ':host{display:block;width:24px;height:24px}'; }
  html() { return `<svg width="24" height="24" viewBox="0 0 24 24" fill="none">${VI[+this.getAttribute('n')]}</svg>`; }
});
def('toggle-switch', class extends Base {
  css() { const on = this.hasAttribute('on'); return `:host{display:flex;width:40px;height:20px;border-radius:10px;align-items:center;justify-content:space-between;font-size:11px;line-height:18px;box-sizing:border-box;padding:0 5px;border:1px solid ${on ? '#2aab94' : '#b4b4b4'};background:${on ? '#2aab94' : 'transparent'};color:${on ? '#1c4f45' : '#b4b4b4'};flex-direction:${on ? 'row-reverse' : 'row'}}i{width:10px;height:10px;border-radius:50%;background:${on ? '#252423' : '#b4b4b4'}}`; }
  html() { return '<i></i><slot></slot>'; }
});
def('viz-pane', class extends Base {
  css() { return `:host{display:block;width:227px;border-left:1px solid #666;border-right:1px solid #666;background:#141414;box-sizing:border-box}
    .h{height:72px}.m{height:56px}.g{display:grid;grid-template-columns:repeat(6,35px);grid-auto-rows:35px;padding:12.500px 0 0 13.500px;height:293px;border-bottom:1px solid #ddd}
    .dots{display:flex;gap:3px;padding:8.500px 0 0 4.500px}.dots i{width:3px;height:3px;background:#fff;border-radius:50%}
    .drop{margin:0 7px 0 5px;border:1px dashed #777}.s{height:38px}.t{display:flex}.t toggle-switch{margin:0 27px 0 auto}`; }
  html() {
    return `<div class="h">${flow(1469, 213, [T(1479.3, 245.4, 123, 19, 'Visualizations', 'font-weight:600;color:#fff'), { x: 1671, y: 232, w: 11, html: dbl }])}${flow(1469, 248.2, [T(1479.3, 276.8, 76.7, 14.8, 'Build visual', 'font-weight:600;color:#fff')])}</div>
    <div class="m"><svg width="225" height="56" viewBox="1469 285 225 56" fill="none"><rect x="1479" y="285" width="40" height="40" rx="2" fill="#292929"/><path d="M1484 290.700H1508" stroke="#ccc" stroke-width="1.200"/><g fill="#2aab94" stroke="#d0d0d0" stroke-width="1.200" stroke-dasharray="2 1.500"><rect x="1484.600" y="296.500" width="29" height="9.500"/><rect x="1484.600" y="310.500" width="29" height="9"/></g>
    <path d="M1572 319H1567.500V290.500H1580L1587.500 298V301" stroke="#b4b4b4" stroke-width="1.400"/><path d="M1580 290.500V299.500H1588Z" fill="#fff"/><path d="M1573.500 319.500C1578 318 1576 312 1582 310.500L1586 314.500C1586 320 1578 320.500 1573.500 319.500ZM1582 310.500L1595 302Q1597 301.500 1596 304L1586 314.500" fill="#333" stroke="#ccc" stroke-width="1.300"/>
    <path d="M1469 340.400H1489.500L1499 331.500L1508.500 340.400H1694" stroke="#777" stroke-width="1.200"/></svg></div>
    <div class="g">${VI.map((_, i) => `<viz-icon n="${i}"></viz-icon>`).join('')}<div class="dots"><i></i><i></i><i></i></div></div>
    <div class="s">${flow(1469, 634, [T(1484, 659.8, 42, 15, 'Values')])}</div>
    <div class="drop" style="height:35px">${flow(1475, 673, [T(1487.3, 694, 133.7, 15, 'Add data fields here')])}</div>
    <div style="height:45px">${flow(1469, 707, [T(1484.3, 735, 86.7, 15, 'Drill through', 'font-weight:600')])}</div>
    <div class="t" style="height:34px">${flow(1469, 752, [T(1484.3, 766.7, 82.7, 15, 'Cross-report')])}<toggle-switch>Off</toggle-switch></div>
    <div class="t" style="height:32px">${flow(1469, 786, [T(1484.3, 799.7, 92.3, 15, 'Keep all filters')])}<toggle-switch on>On</toggle-switch></div>
    <div class="drop" style="height:32px;background:#000">${flow(1475, 819, [T(1485, 839.7, 188.3, 15, 'Add drill-through fields here')])}</div>`;
  }
});

/* ---------- Data pane ---------- */
def('field-row', class extends Base {
  css() { return ':host{display:block;height:30px;color:#fff}'; }
  html() {
    const w = +this.getAttribute('w');
    const b = '<rect x="1750.600" y="349.600" width="14" height="14" rx="1.500" stroke="#b4b4b4" stroke-width="1.200"/>';
    const s = this.hasAttribute('sum') ? '<path d="M1788.500 351.500V349.300H1776.500L1783 356L1776.500 362.700H1788.500V360.500" stroke="#e0e0e0" stroke-width="1.300"/>' : '';
    return flow(1695, 341.5, [S(1750, 349, 40, 15, b + s), T(1797.9, 361.7, w, 15, this.getAttribute('label'))]);
  }
});
def('data-pane', class extends Base {
  css() { return ':host{display:block;flex:1;background:#141414}.h{height:57px}.q{width:215px;height:30px;margin-left:5px;border:1px solid #666;border-bottom-color:#aaa;border-radius:4px;background:#242424}.sh{height:41.500px}'; }
  html() {
    const f = [['Age', 26.3, 1], ['Category', 59.3], ['Customer Name', 107.2], ['Email', 35], ['Gender', 48], ['Location', 56], ['Order Value ($)', 99, 1], ['Purchases Per ...', 105, 1], ['Rating', 42, 1], ['Sentiment', 67.3]];
    return `<div class="h">${flow(1695, 213, [T(1705.5, 245.4, 41.5, 19, 'Data', 'font-weight:600;color:#fff'), { x: 1897, y: 232, w: 11, html: dbl }])}</div>
    <div class="q">${flow(1701, 271, [S(1715, 275, 19, 19, '<circle cx="1722.500" cy="282.500" r="6.300" stroke="#aaa" stroke-width="1.300"/><path d="M1727 287L1733 293" stroke="#aaa" stroke-width="1.300"/>'), T(1742.7, 292, 50.7, 17, 'Search', 'color:#a0a0a0')])}</div>
    <div class="sh">${flow(1695, 300, [S(1713, 318, 34, 17, '<path d="M1714.500 323.500L1719.300 328.500L1724 323.500M1731.700 321.500Q1731.700 318.700 1734.500 318.700H1743Q1746 318.700 1746 321.500V330.500Q1746 333.300 1743 333.300H1734.500Q1731.700 333.300 1731.700 330.500ZM1736.500 318.700V333.300M1741.300 318.700V333.300M1731.700 323.500H1746M1731.700 328.500H1746" stroke="#e0e0e0" stroke-width="1.300"/>'), T(1753.7, 332, 44, 15, 'Sheet1', 'color:#fff')])}</div>
    ${f.map(([l, w, s]) => `<field-row label="${l}" w="${w}" ${s ? 'sum' : ''}></field-row>`).join('')}`;
  }
});

def('status-bar', class extends Base {
  css() { return ':host{display:block;height:31px;border-top:1px solid #666;color:#d0cecc;box-sizing:border-box}.c{height:27px}.b{height:1px;background:#000}.w{height:1px;margin-left:944px;background:#fff}.x{height:1px;background:#444}'; }
  html() {
    return `<div class="c">${flow(0, 991, [T(5.4, 1011.7, 72.5, 15, 'Page 1 of 1'),
      S(1654, 998, 156, 15, '<path d="M1655.700 1004.700H1661M1798.700 1005.200H1808.700M1803.700 1000.200V1010.200" stroke="#d6d6d6" stroke-width="1.700"/><path d="M1667 1005.500H1792" stroke="#d6d6d6"/><rect x="1729" y="999" width="5" height="13" fill="#d6d6d6"/>'),
      T(1825.7, 1010, 35.7, 15, '110%'),
      S(1877, 998, 21, 15, '<rect x="1879" y="1000" width="17.500" height="11.800" rx="2" stroke="#d6d6d6" stroke-width="1.500"/><path d="M1885.500 1003H1883V1005M1883 1006.500V1008.700H1885.500M1890 1003H1892.500V1005M1892.500 1006.500V1008.700H1890" stroke="#d6d6d6" stroke-width="1.400"/>')])}</div><div class="b"></div><div class="w"></div><div class="x"></div>`;
  }
});

def('task-bar', class extends Base {
  css() { return ':host{display:block;height:59px;background:#1c1c1c;color:#fff}.r{display:flex}.apps{width:1600px}.two{display:flex;flex-direction:column}'; }
  html() {
    const dot = x => `<rect x="${x}" y="1069.700" width="8" height="4.300" rx="2.100" fill="#9a9a9a"/>`;
    return `<div class="r"><div class="apps">${flow(0, 1021, [
      S(834, 1025, 31, 50, `<defs><linearGradient id="w" x1="0" y1="0" x2="1" y2="1"><stop offset="0" stop-color="#86dcfc"/><stop offset="1" stop-color="#0f8cf5"/></linearGradient></defs><path d="M835 1036H849V1050H835ZM850 1036H864V1050H850ZM835 1051H849V1065H835ZM850 1051H864V1065H850Z" fill="url(#w)"/>`),
      S(890, 1025, 32, 50, `<defs><linearGradient id="f" x1="0" y1="0" x2="1" y2="1"><stop offset="0" stop-color="#ffe178"/><stop offset="1" stop-color="#f9bd15"/></linearGradient></defs><path d="M891 1039Q891 1037 893 1037H900L904 1040.500H919V1050H891Z" fill="#e09a0c"/><path d="M891 1042.500Q899 1042.500 903 1040.500H919Q921 1040.500 921 1042.500V1061Q921 1063 919 1063H893Q891 1063 891 1061Z" fill="url(#f)"/><path d="M896 1063V1058Q896 1056 898 1056H914Q916 1056 916 1058V1063Z" fill="#0c6cc0"/><path d="M900 1059.700H912" stroke="#0a4c90" stroke-width="1.300"/>${dot(902)}`),
      S(945, 1025, 38, 50, `<circle cx="961" cy="1050" r="15" fill="#e33b2e"/><path d="M961 1050L948 1042.500A15 15 0 0 0 961 1065L967.500 1053.700Z" fill="#2a9a48"/><path d="M961 1043H974A15 15 0 0 1 961 1065L967.500 1053.700Z" fill="#fcc31e"/><circle cx="961" cy="1050" r="7.300" fill="#fff"/><circle cx="961" cy="1050" r="5.800" fill="#2c72e8"/><circle cx="971.700" cy="1039.300" r="10.300" fill="#0b0b0b"/><ellipse cx="971.800" cy="1037.500" rx="6.500" ry="8" fill="#dccdb4"/><path d="M966 1042Q972 1036 978 1042Q979 1048 972 1049.500Q965 1048 966 1042Z" fill="#b98555"/><path d="M972 1030V1037" stroke="#c73056" stroke-width="2"/><path d="M971 1037H974V1042H971Z" fill="#4f8070"/>${dot(957)}`),
      S(991, 1025, 50, 50, `<defs><linearGradient id="p" x1="0" y1="0" x2="1" y2="1"><stop offset="0" stop-color="#e8a70f"/><stop offset="1" stop-color="#c8790a"/></linearGradient><linearGradient id="q" x1="0" y1="0" x2="1" y2="1"><stop offset="0" stop-color="#f6d450"/><stop offset="1" stop-color="#e0a51c"/></linearGradient><linearGradient id="s" x1="0" y1="0" x2="1" y2="1"><stop offset="0" stop-color="#fbeaa0"/><stop offset="1" stop-color="#f3cf42"/></linearGradient></defs><rect x="991.500" y="1025.500" width="49" height="49" rx="4" fill="#2a2a2a" stroke="#333"/><rect x="1017" y="1035" width="10" height="30" rx="1" fill="url(#p)"/><rect x="1010.500" y="1042" width="10.500" height="23" rx="1" fill="url(#q)"/><rect x="1004" y="1050" width="10.300" height="15" rx="1" fill="url(#s)"/><rect x="1006" y="1069.700" width="20" height="4.300" rx="2.100" fill="#e3aa9c"/>`),
      S(1055, 1025, 32, 50, `<defs><linearGradient id="e" x1="0" y1=".2" x2="1" y2=".4"><stop offset="0" stop-color="#2aa5e0"/><stop offset=".5" stop-color="#35c8cc"/><stop offset="1" stop-color="#66e36c"/></linearGradient><linearGradient id="g" x1="0" y1="0" x2=".4" y2="1"><stop offset="0" stop-color="#1da0e8"/><stop offset="1" stop-color="#0c66c4"/></linearGradient></defs><circle cx="1071" cy="1050" r="15" fill="url(#g)"/><path d="M1056.200 1047C1058 1039 1064 1035 1071 1035C1080 1035 1086 1042 1086 1048.500C1086 1053 1082 1055.500 1078 1055.500C1074 1055.500 1072.500 1053.500 1073.500 1051.500C1074.500 1049.500 1072.500 1043.500 1066 1043.500C1061 1043.500 1058 1045.500 1056.200 1047Z" fill="url(#e)"/><path d="M1068.500 1045C1063 1048 1063 1056 1068 1061C1073 1065 1080 1062 1084.500 1057C1080 1059 1073 1058 1070.500 1054C1069 1051 1070 1049 1072 1047.500C1071.500 1046 1070 1045 1068.500 1045Z" fill="#0f4c97"/><path d="M1073.500 1051C1074 1049.500 1072.500 1046.500 1070.500 1047.500C1069 1049.500 1069.500 1053 1071 1055C1073.500 1058.500 1080 1058.500 1084.500 1056.500L1087 1050L1086 1049C1086 1053 1082 1055.500 1078 1055.500C1074 1055.500 1072.500 1053.500 1073.500 1051Z" fill="#1c1c1c"/>${dot(1067)}`)])}</div>
    ${flow(1600, 1021, [S(1625, 1044, 16, 10, '<path d="M1627 1052.500L1633 1046.500L1639 1052.500" stroke="#fff" stroke-width="1.700"/>')])}
    <div class="two" style="width:60px">${flow(1641, 1021, [T(1666.7, 1045.7, 28.7, 14.5, 'ENG')])}${flow(1641, 1050.1, [T(1674, 1066, 14.3, 14.5, 'IN')])}</div>
    ${flow(1701, 1021, [S(1717, 1039, 82, 22, `<g stroke="#fff" stroke-width="1.500"><path d="M1731 1041H1720Q1718.500 1041 1718.500 1042.500V1054.500Q1718.500 1056 1720 1056H1734M1724 1056V1059M1731 1056V1059M1721.500 1059.300H1733M1735 1047V1060"/><rect x="1732.300" y="1041" width="5" height="5.500" rx="1"/><path d="M1749 1047.500H1752L1756.500 1043V1057L1752 1052.500H1749ZM1759.500 1047L1766.500 1054M1766.500 1047L1759.500 1054"/><path d="M1788 1044.500H1791Q1795 1044.500 1795 1048.500V1052.500Q1795 1056.500 1791 1056.500H1780M1797.500 1048.500V1052.500"/></g><path d="M1778.500 1052C1777 1046 1780 1042 1785 1040.500C1787.500 1046 1786.500 1051.500 1781.500 1052.500L1779 1056.500Z" fill="#fff"/>`)])}
    <div class="two">${flow(1799, 1021, [T(1860, 1045, 35.7, 14.5, '09:56')])}${flow(1799, 1049.4, [T(1818.7, 1064.9, 77, 14.5, '08-07-2025')])}</div></div>`;
  }
});

def('pbi-app', class extends Base {
  css() { return ':host{display:flex;flex-direction:column;width:1920px;height:1080px;overflow:hidden}.w{display:flex;height:777px}'; }
  html() { return `<title-bar></title-bar><menu-bar></menu-bar><ribbon-bar></ribbon-bar><div class="w"><side-rail></side-rail><report-canvas></report-canvas><viz-pane></viz-pane><data-pane></data-pane></div><status-bar></status-bar><task-bar></task-bar>`; }
});
</script>
</body>
</html>
